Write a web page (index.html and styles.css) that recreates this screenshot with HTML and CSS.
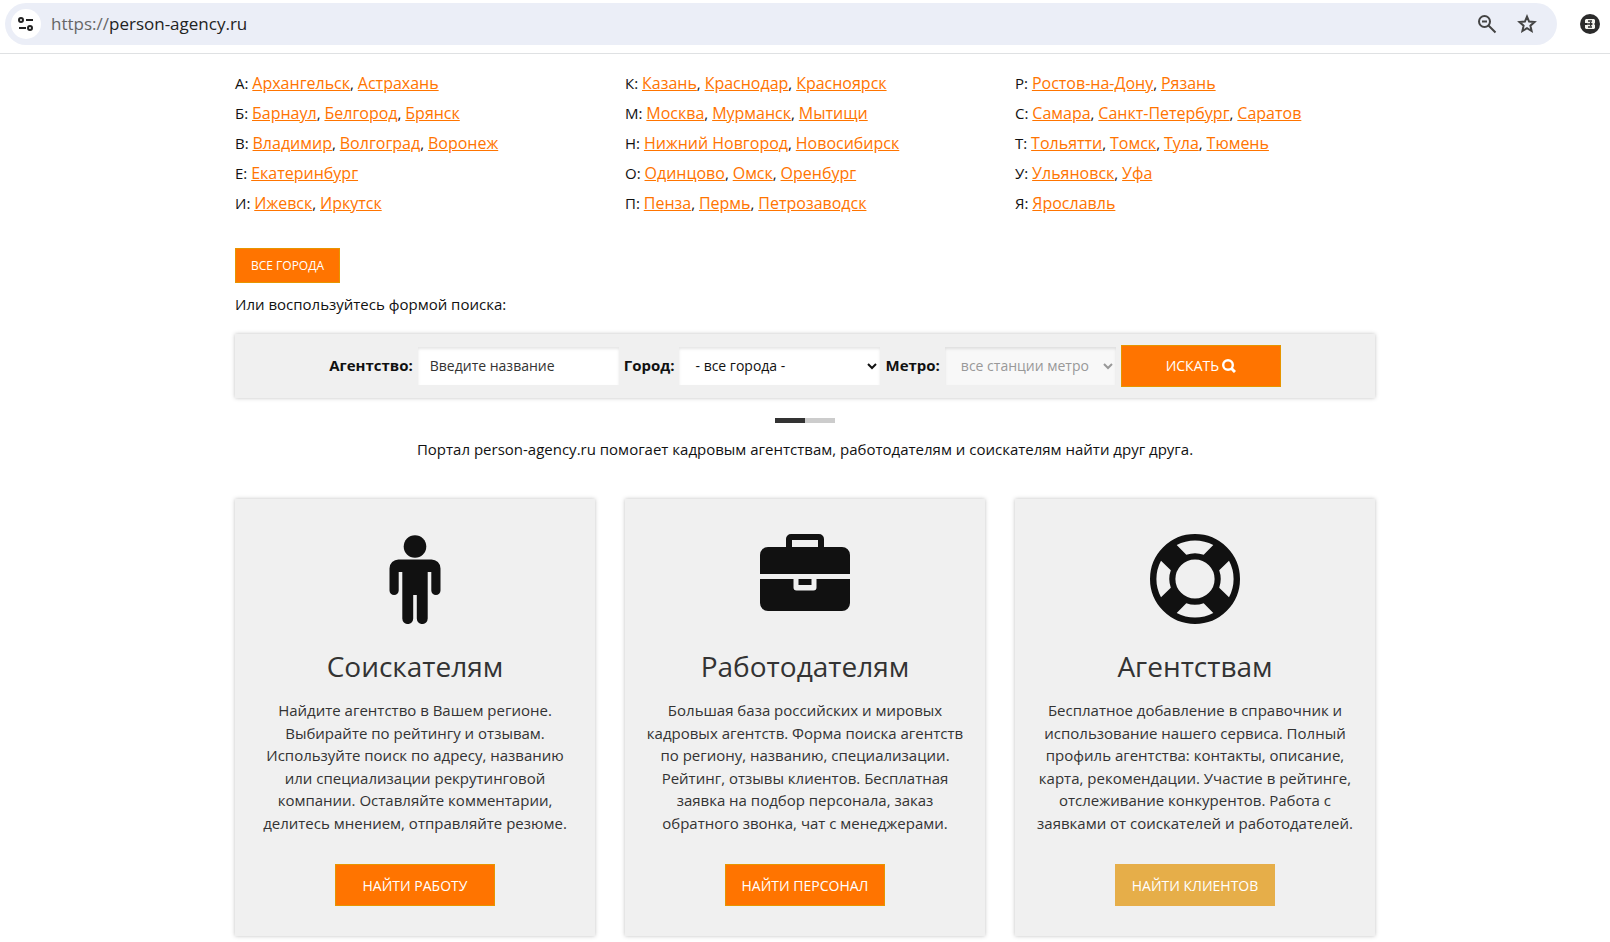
FILE: index.html
```html
<!DOCTYPE html>
<html lang="ru">
<head>
    <meta charset="UTF-8">
    <meta name="viewport" content="width=device-width, initial-scale=1.0">
    <title>Кадровые агентства</title>
    <link rel="stylesheet" href="styles.css">
</head>
<body>
    <header class="browser-bar">
        <div class="address">
            <button type="button" class="site-info" aria-label="Сведения о сайте">
                <svg width="16" height="16" viewBox="0 0 16 16" fill="none" stroke="#222" stroke-width="2">
                    <circle cx="3" cy="4" r="2"/>
                    <path d="M8 4h7M1 12h7"/>
                    <circle cx="12" cy="12" r="2"/>
                </svg>
            </button>
            <div class="url"><span>https://</span>person-agency.ru</div>
            <button type="button" class="bar-button" aria-label="Масштаб">
                <svg width="20" height="20" viewBox="0 0 20 20" fill="none" stroke="#444" stroke-width="2">
                    <circle cx="7.500" cy="7.500" r="5.500"/>
                    <path d="M11.500 11.500l7 7M5 7.500h5"/>
                </svg>
            </button>
            <button type="button" class="bar-button" aria-label="Добавить в закладки">
                <svg width="20" height="20" viewBox="0 0 20 20" fill="none" stroke="#444" stroke-width="2">
                    <path d="M10 2.600l2.100 5 5.400.5-4.100 3.600 1.200 5.300-4.600-2.800L5.400 17l1.200-5.300L2.500 8.100l5.400-.5z"/>
                </svg>
            </button>
        </div>
        <button type="button" class="bar-button" aria-label="Расширение">
            <svg width="20" height="20" viewBox="0 0 20 20">
                <circle cx="10" cy="10" r="10" fill="#2b2b2b"/>
                <path d="M6 5h8l1 1v3l-1 1 1 1v3l-1 1H6l-1-1v-3h2v-2H5V6z" fill="#f3f3ee"/>
                <path d="M4 10h7M8 7h4M8 13h4" fill="none" stroke="#2b2b2b" stroke-width="1.500"/>
                <path d="M10 7.500l3 2.500-3 2.500z" fill="#2b2b2b"/>
            </svg>
        </button>
    </header>

    <main class="container">
        <div class="cities">
            <ul>
                <li>А: <a href="#">Архангельск</a>, <a href="#">Астрахань</a></li>
                <li>Б: <a href="#">Барнаул</a>, <a href="#">Белгород</a>, <a href="#">Брянск</a></li>
                <li>В: <a href="#">Владимир</a>, <a href="#">Волгоград</a>, <a href="#">Воронеж</a></li>
                <li>Е: <a href="#">Екатеринбург</a></li>
                <li>И: <a href="#">Ижевск</a>, <a href="#">Иркутск</a></li>
            </ul>
            <ul>
                <li>К: <a href="#">Казань</a>, <a href="#">Краснодар</a>, <a href="#">Красноярск</a></li>
                <li>М: <a href="#">Москва</a>, <a href="#">Мурманск</a>, <a href="#">Мытищи</a></li>
                <li>Н: <a href="#">Нижний Новгород</a>, <a href="#">Новосибирск</a></li>
                <li>О: <a href="#">Одинцово</a>, <a href="#">Омск</a>, <a href="#">Оренбург</a></li>
                <li>П: <a href="#">Пенза</a>, <a href="#">Пермь</a>, <a href="#">Петрозаводск</a></li>
            </ul>
            <ul>
                <li>Р: <a href="#">Ростов-на-Дону</a>, <a href="#">Рязань</a></li>
                <li>С: <a href="#">Самара</a>, <a href="#">Санкт-Петербург</a>, <a href="#">Саратов</a></li>
                <li>Т: <a href="#">Тольятти</a>, <a href="#">Томск</a>, <a href="#">Тула</a>, <a href="#">Тюмень</a></li>
                <li>У: <a href="#">Ульяновск</a>, <a href="#">Уфа</a></li>
                <li>Я: <a href="#">Ярославль</a></li>
            </ul>
        </div>

        <a href="#" class="btn btn-small">Все города</a>
        <p class="hint">Или воспользуйтесь формой поиска:</p>

        <form class="panel search">
            <label for="agency">Агентство:</label>
            <input type="text" id="agency" name="agency" placeholder="Введите название">
            <label for="city">Город:</label>
            <select id="city" name="city">
                <option>- все города -</option>
            </select>
            <label for="metro">Метро:</label>
            <select id="metro" name="metro" disabled>
                <option>все станции метро</option>
            </select>
            <button type="submit" class="btn">Искать
                <svg width="14" height="14" viewBox="0 0 14 14" fill="none" stroke="#fff">
                    <circle cx="6" cy="6" r="4.800" stroke-width="2.400"/>
                    <path d="M9.500 9.500l3.500 3.500" stroke-width="3"/>
                </svg>
            </button>
        </form>

        <div class="divider"></div>
        <p class="about">Портал person-agency.ru помогает кадровым агентствам, работодателям и соискателям найти друг друга.</p>

        <div class="cards">
            <section class="panel card">
                <svg width="90" height="90" viewBox="0 0 90 90" fill="#111">
                    <circle cx="45" cy="12.500" r="11.300"/>
                    <path d="M28.500 25.400h33a9 9 0 0 1 9 9v22a4.600 4.600 0 0 1-9.200 0V38H57.700v46.600a5.400 5.400 0 0 1-10.900 0V61h-3.600v23.600a5.400 5.400 0 0 1-10.900 0V38h-3.600v18.400a4.600 4.600 0 0 1-9.200 0v-22a9 9 0 0 1 9-9z"/>
                </svg>
                <h2>Соискателям</h2>
                <p>Найдите агентство в Вашем регионе. Выбирайте по рейтингу и отзывам. Используйте поиск по адресу, названию или специализации рекрутинговой компании. Оставляйте комментарии, делитесь мнением, отправляйте резюме.</p>
                <a href="#" class="btn">Найти работу</a>
            </section>
            <section class="panel card">
                <svg width="90" height="90" viewBox="0 0 90 90" fill="#111">
                    <path fill-rule="evenodd" d="M26 13V5a5 5 0 0 1 5-5h28a5 5 0 0 1 5 5v8h18a8 8 0 0 1 8 8v19H0V21a8 8 0 0 1 8-8zM32 13h26V6H32z"/>
                    <path d="M0 45h33.500v8.500a3 3 0 0 0 3 3h17a3 3 0 0 0 3-3V45H90v24a8 8 0 0 1-8 8H8a8 8 0 0 1-8-8z"/>
                    <path d="M38.500 45h13v6h-13z"/>
                </svg>
                <h2>Работодателям</h2>
                <p>Большая база российских и мировых кадровых агентств. Форма поиска агентств по региону, названию, специализации. Рейтинг, отзывы клиентов. Бесплатная заявка на подбор персонала, заказ обратного звонка, чат с менеджерами.</p>
                <a href="#" class="btn">Найти персонал</a>
            </section>
            <section class="panel card">
                <svg width="90" height="90" viewBox="0 0 90 90">
                    <circle cx="45" cy="45" r="32.300" fill="none" stroke="#111" stroke-width="25.400"/>
                    <g fill="#f0f0f0">
                        <path id="gap" d="M26.700 11a38.700 38.700 0 0 1 36.600 0l-9.600 9.800a26 26 0 0 0-17.400 0z"/>
                        <use href="#gap" transform="rotate(90 45 45)"/>
                        <use href="#gap" transform="rotate(180 45 45)"/>
                        <use href="#gap" transform="rotate(270 45 45)"/>
                    </g>
                </svg>
                <h2>Агентствам</h2>
                <p>Бесплатное добавление в справочник и использование нашего сервиса. Полный профиль агентства: контакты, описание, карта, рекомендации. Участие в рейтинге, отслеживание конкурентов. Работа с заявками от соискателей и работодателей.</p>
                <a href="#" class="btn btn-muted">Найти клиентов</a>
            </section>
        </div>
    </main>
</body>
</html>
```
FILE: styles.css
```css
* {
    box-sizing: border-box;
}

body {
    margin: 0;
    font-family: "Open Sans", sans-serif;
    font-size: 15px;
    line-height: 1.5;
    color: #111;
    background-color: #fff;
}

p, h2, ul {
    margin: 0;
    padding: 0;
}

svg {
    display: block;
}

/* browser bar */
.browser-bar {
    display: flex;
    align-items: center;
    gap: 23px;
    height: 54px;
    padding: 3px 10px 8px 5px;
    border-bottom: 1px solid #dfe1e3;
}

.address {
    flex: 1;
    display: flex;
    align-items: center;
    gap: 20px;
    height: 42px;
    padding: 0 20px 0 6px;
    border-radius: 21px;
    background-color: #ebeef7;
}

.site-info, .bar-button {
    display: flex;
    align-items: center;
    justify-content: center;
    padding: 0;
    border: none;
    background: none;
}

.site-info {
    width: 30px;
    height: 30px;
    border-radius: 50%;
    background-color: #fff;
}

.url {
    flex: 1;
    margin-left: -10px;
    font-size: 17px;
    color: #222;
}

.url span {
    color: #666;
}

/* page */
.container {
    max-width: 1140px;
    margin: 0 auto;
    padding: 14px 0 6px;
}

.cities, .cards {
    display: grid;
    grid-template-columns: repeat(3, 1fr);
    gap: 30px;
}

.cities {
    margin-bottom: 30px;
}

.cities ul {
    list-style: none;
}

.cities li {
    line-height: 30px;
}

.cities a {
    font-size: 16px;
    line-height: 1;
    color: #ff7400;
}

.btn {
    display: inline-flex;
    align-items: center;
    justify-content: center;
    gap: 3px;
    width: 160px;
    height: 42px;
    border: 1px solid #e69500;
    background-color: #ff7400;
    color: #fff;
    font-family: inherit;
    font-size: 14px;
    text-transform: uppercase;
    text-decoration: none;
    cursor: pointer;
}

.btn-small {
    width: 105px;
    height: 35px;
    font-size: 12px;
}

.btn-muted {
    border-color: #e6ae49;
    background-color: #e6ae49;
}

.hint {
    margin: 10px 0 18px;
}

.panel {
    background-color: #f0f0f0;
    box-shadow: 0 0 4px rgba(0, 0, 0, 0.25);
}

.search {
    display: flex;
    align-items: center;
    justify-content: center;
    gap: 5px;
    height: 64px;
}

.search label {
    font-weight: bold;
}

.search input, .search select {
    width: 201px;
    height: 38px;
    padding: 0 12px;
    border: none;
    border-radius: 0;
    background-color: #fff;
    box-shadow: inset 0 2px 3px rgba(0, 0, 0, 0.1);
    font-family: inherit;
    font-size: 14px;
    color: #111;
}

.search select {
    padding-right: 4px;
}

.search input::placeholder {
    color: #333;
}

.search #metro {
    width: 171px;
    background-color: #f8f8f8;
    color: #999;
    opacity: 1;
}

.divider {
    width: 60px;
    height: 5px;
    margin: 20px auto 15px;
    border-left: 30px solid #333;
    background-color: #ccc;
}

.about {
    margin-bottom: 39px;
    text-align: center;
}

.card {
    display: flex;
    flex-direction: column;
    align-items: center;
    padding: 35px 20px 30px;
    text-align: center;
}

.card h2 {
    margin: 21px 0 12px;
    font-size: 28px;
    font-weight: 400;
    line-height: 42px;
    color: #333;
}

.card p {
    margin-bottom: 30px;
    color: #333;
}

.card .btn {
    font-weight: 500;
}
```
